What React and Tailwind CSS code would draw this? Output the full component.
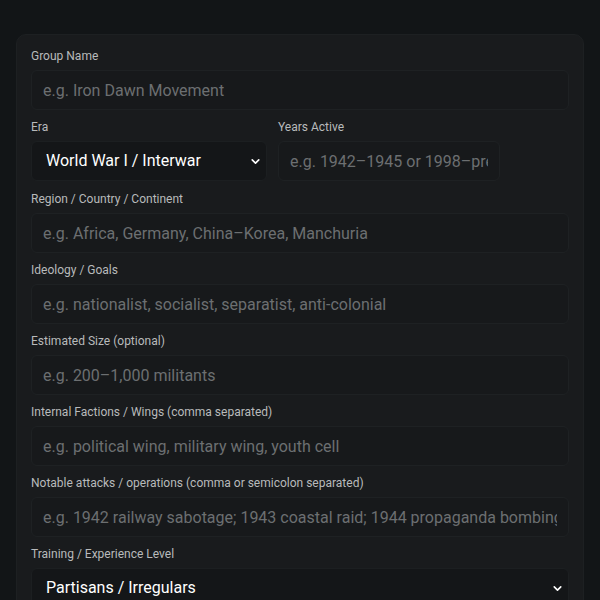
import { ChevronDown } from "lucide-react";

const inputCls =
  "w-full h-10 rounded-md bg-[#17191b] border border-[#1e2123] px-[11px] text-base text-[#e5e5e5] placeholder:text-[#6c6f71] outline-none";

const Field = ({ label, children, className = "" }) => (
  <div className={"flex flex-col gap-[6px] " + className}>
    <label className="text-xs leading-4 text-[#b8babb]">{label}</label>
    {children}
  </div>
);

const Select = ({ value, className = "" }) => (
  <div
    className={
      "h-10 rounded-md bg-[#141618] border border-[#1c1f21] pl-[14px] pr-[4px] flex items-center justify-between text-base text-white " +
      className
    }
  >
    <span>{value}</span>
    <ChevronDown size={13} strokeWidth={3} className="text-white" />
  </div>
);

export default function App() {
  return (
    <div
      className="min-h-screen bg-[#121517] px-4 pt-[34px]"
      style={{ fontFamily: "Roboto, 'Noto Sans', sans-serif" }}
    >
      <div className="rounded-[10px] bg-[#191b1d] border border-[#1d2022] px-[14px] pt-[13px] pb-6 flex flex-col gap-[9px]">
        <Field label="Group Name">
          <input className={inputCls} placeholder="e.g. Iron Dawn Movement" />
        </Field>

        <div className="flex gap-[11px] pb-px">
          <Field label="Era" className="w-[236px]">
            <Select value="World War I / Interwar" />
          </Field>
          <Field label="Years Active" className="w-[222px]">
            <input className={inputCls} placeholder="e.g. 1942–1945 or 1998–present" />
          </Field>
        </div>

        <Field label="Region / Country / Continent">
          <input className={inputCls} placeholder="e.g. Africa, Germany, China–Korea, Manchuria" />
        </Field>
        <Field label="Ideology / Goals">
          <input className={inputCls} placeholder="e.g. nationalist, socialist, separatist, anti-colonial" />
        </Field>
        <Field label="Estimated Size (optional)">
          <input className={inputCls} placeholder="e.g. 200–1,000 militants" />
        </Field>
        <Field label="Internal Factions / Wings (comma separated)">
          <input className={inputCls} placeholder="e.g. political wing, military wing, youth cell" />
        </Field>
        <Field label="Notable attacks / operations (comma or semicolon separated)">
          <input
            className={inputCls}
            placeholder="e.g. 1942 railway sabotage; 1943 coastal raid; 1944 propaganda bombing"
          />
        </Field>
        <Field label="Training / Experience Level">
          <Select value="Partisans / Irregulars" />
        </Field>
      </div>
    </div>
  );
}
